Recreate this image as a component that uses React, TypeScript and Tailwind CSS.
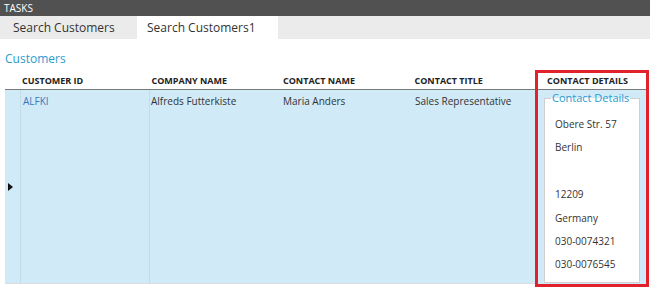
import React from "react";

const details = ["Obere Str. 57", "Berlin", "", "12209", "Germany", "030-0074321", "030-0076545"];

const columns = [
    { title: "CUSTOMER ID", width: "w-[130px]" },
    { title: "COMPANY NAME", width: "w-[132px]" },
    { title: "CONTACT NAME", width: "w-[132px]" },
    { title: "CONTACT TITLE", width: "w-[121px]" },
];

export default function App() {
    return (
        <div className="flex flex-col w-[650px] h-[288px] bg-white overflow-hidden text-[#333] font-['Open_Sans',sans-serif]">
            {/* title bar */}
            <div className="h-[16px] bg-[#515151] px-[4px] text-[10px] leading-[16px] text-white">TASKS</div>

            {/* tabs */}
            <div className="flex h-[23px] bg-[#ebebeb] text-[12px] leading-[23px] text-[#333]">
                <div className="w-[137px] pl-[13px]">Search Customers</div>
                <div className="w-[141px] pl-[10px] bg-white">Search Customers1</div>
            </div>

            <div className="pl-[5px] pt-[12px] text-[12px] leading-[16px] text-[#2a9ccf]">Customers</div>

            {/* grid */}
            <div className="flex pl-[5px] mt-[3px]">
                <div className="flex flex-col w-[530px] pt-[3px]">
                    <div className="flex h-[17px] border-b border-[#7a7a7a] text-[9px] font-bold leading-[16px] text-[#222]">
                        <div className="w-[17px]" />
                        {columns.map((c) => (
                            <div key={c.title} className={c.width}>{c.title}</div>
                        ))}
                    </div>
                    <div className="flex h-[194px] bg-[#d1eaf7] border-b border-[#dcdcdc] text-[10px] leading-[14px]">
                        <div className="flex items-center w-[15px] pl-[3px]">
                            <svg width="5" height="8" viewBox="0 0 5 8"><path d="M0 0 L5 4 L0 8 Z" fill="#111" /></svg>
                        </div>
                        <div className="w-[130px] border-x border-[#c3dcea] pl-[2px] pt-[4px] text-[#3a78bd]">ALFKI</div>
                        <div className="w-[132px] pl-[1px] pt-[4px]">Alfreds Futterkiste</div>
                        <div className="w-[132px] pl-[1px] pt-[4px]">Maria Anders</div>
                        <div className="w-[121px] pl-[1px] pt-[4px]">Sales Representative</div>
                    </div>
                </div>

                {/* highlighted column */}
                <div className="flex flex-col w-[114px] h-[217px] border-[3px] border-[#e1212b]">
                    <div className="h-[17px] pl-[9px] border-b border-[#7a7a7a] bg-white text-[9px] font-bold leading-[16px] text-[#222]">CONTACT DETAILS</div>
                    <div className="flex-1 bg-[#d1eaf7] px-[6px] pb-[1px] pt-[1px]">
                        <fieldset className="h-full bg-white border border-[#cfcfcf] pl-[6px] pr-[2px] pt-0 min-w-0">
                            <legend className="px-[1px] whitespace-nowrap text-[11px] leading-[14px] text-[#2a9ccf]">Contact Details</legend>
                            <div className="flex flex-col pt-[12px] pl-[4px]">
                                {details.map((d, i) => (
                                    <div key={i} className="h-[23.4px] text-[10px] leading-[14px]">{d}</div>
                                ))}
                            </div>
                        </fieldset>
                    </div>
                </div>
            </div>
        </div>
    );
}
